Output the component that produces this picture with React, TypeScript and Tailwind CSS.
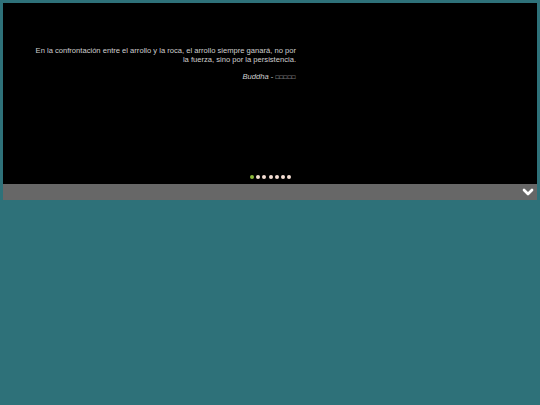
import { ChevronDown } from 'lucide-react';

const DOTS = [0, 1, 2, 3, 4, 5, 6];

export default function App() {
  return (
    <div className="min-h-[405px] w-[540px] bg-[#2e7179] px-[3px] pt-[3px]" style={{ fontFamily: '"Liberation Sans", Arial, sans-serif' }}>
      <div className="relative flex h-[181px] flex-col bg-black">
        <div className="ml-[31px] mt-[43px] w-[262px] text-right text-[7.6px] leading-[9px] text-[#d0d0d0]">
          <p>En la confrontación entre el arrollo y la roca, el arrollo siempre ganará, no por la fuerza, sino por la persistencia.</p>
          <p className="mt-[8px]">
            <em>Buddha</em> - <span className="text-[6px] tracking-[0.5px]">□□□□□</span>
          </p>
        </div>
        <div className="mt-auto mb-[5px] flex justify-center gap-[2.2px] pl-[1px]">
          {DOTS.map(i => (
            <span key={i} className={i === 0 ? 'h-[4px] w-[4px] rounded-full bg-[#8dba3a]' : 'h-[4px] w-[4px] rounded-full bg-[#f4ddd3]'} />
          ))}
        </div>
      </div>
      <div className="flex h-[16px] items-center justify-end bg-[#676767] pr-[1px]">
        <ChevronDown className="h-[16px] w-[16px] text-white" strokeWidth={4} />
      </div>
    </div>
  );
}
